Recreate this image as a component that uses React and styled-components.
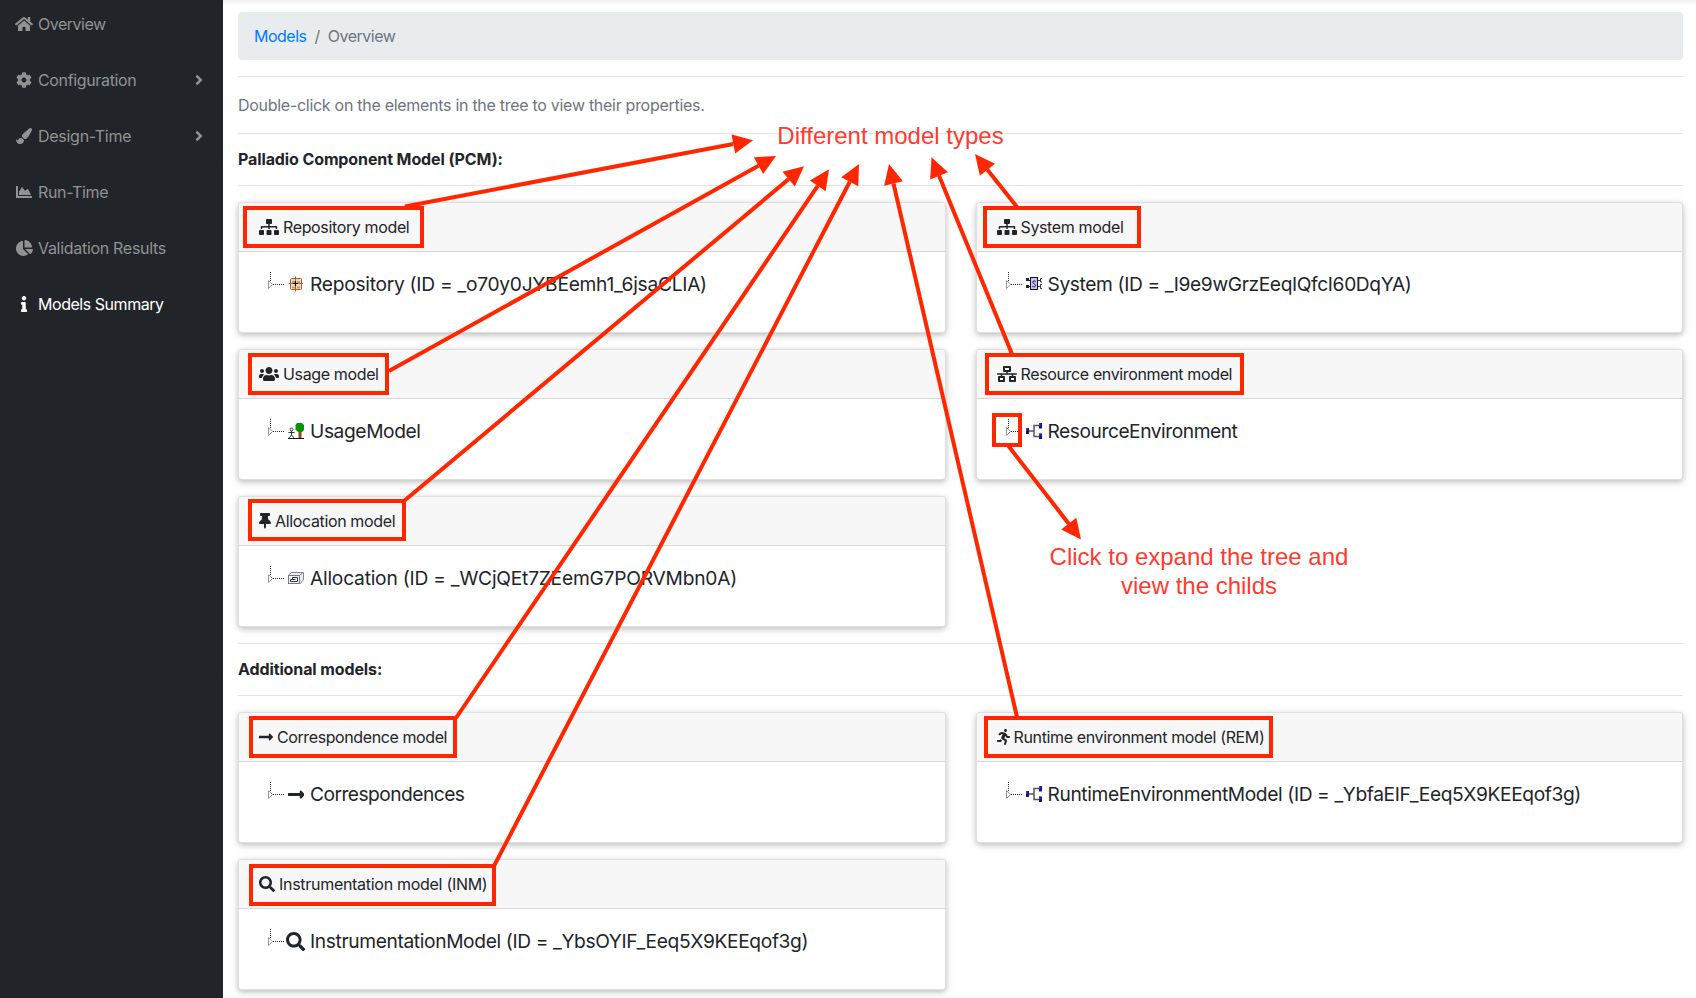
import React from 'react';
import styled, { createGlobalStyle } from 'styled-components';
import {
  FaHome, FaCog, FaPaintBrush, FaChartArea, FaChartPie, FaInfo, FaAngleRight,
  FaSitemap, FaUsers, FaNetworkWired, FaThumbtack, FaLongArrowAltRight, FaRunning, FaSearch,
} from 'react-icons/fa';

const GlobalStyle = createGlobalStyle`
  *, *::before, *::after { box-sizing: border-box; }
  body {
    margin: 0;
    background: #fff;
    color: #212529;
    font: 400 16px/24px Inter, "Liberation Sans", sans-serif;
    overflow: hidden;
  }
`;

const Page = styled.div`
  position: relative;
  display: flex;
  width: 1696px;
  height: 998px;
  overflow: hidden;
`;

const Sidebar = styled.nav`
  flex: 0 0 223px;
  background: #212529;
  display: flex;
  flex-direction: column;
  margin-top: -4px;
`;

const NavItem = styled.a`
  display: flex;
  align-items: center;
  height: 56px;
  padding: 0 20px 0 14px;
  color: ${(p) => (p.$active ? '#fff' : '#909294')};
  letter-spacing: ${(p) => p.$track ?? -0.35}px;
`;

/* Font icons keep their own aspect ratio: $w is the glyph width at the given height. */
const FontIcon = styled.span`
  display: flex;
  flex: none;
  svg {
    flex: none;
    width: ${(p) => p.$w}px;
    height: ${(p) => p.$h ?? 16}px;
  }
`;

const NavIcon = styled(FontIcon)`
  justify-content: center;
  width: 20px;
  margin-right: 4px;
`;

const NavText = styled.span`
  flex: 1;
  white-space: nowrap;
`;

const Main = styled.main`
  flex: 1;
  padding: 12px 13px 0 15px;
  background: linear-gradient(#f1f1f1, #fff 5px);
`;

const Breadcrumb = styled.div`
  display: flex;
  height: 48px;
  padding: 12px 16px;
  border-radius: 4px;
  background: #e9ecef;
  color: #6c757d;
  letter-spacing: -0.5px;
`;

const Crumb = styled.a`
  color: #007bff;
`;

const Slash = styled.span`
  padding: 0 8px;
`;

const Rule = styled.hr`
  margin: 16px 0;
  border: 0;
  border-top: 1px solid rgba(0, 0, 0, 0.1);
`;

const Hint = styled.p`
  margin: 0;
  color: #6c757d;
  letter-spacing: -0.285px;
`;

const Heading = styled.h6`
  margin: 0;
  font-size: 16px;
  line-height: 19.2px;
  font-weight: 700;
  letter-spacing: -0.11px;
`;

const CardGrid = styled.div`
  display: grid;
  grid-template-columns: 1fr 1fr;
  gap: 16px 30px;
`;

const Card = styled.section`
  height: 131px;
  border: 1px solid rgba(0, 0, 0, 0.125);
  border-radius: 4px;
  background: #fff;
  box-shadow: 0 2px 5px rgba(0, 0, 0, 0.16), 0 2px 10px rgba(0, 0, 0, 0.12);
`;

const CardHeader = styled.header`
  display: flex;
  align-items: center;
  height: 49px;
  padding: 0 20px;
  gap: 4px;
  background: #f7f7f7;
  border-bottom: 1px solid rgba(0, 0, 0, 0.125);
  border-radius: 3px 3px 0 0;
  letter-spacing: ${(p) => p.$track ?? -0.36}px;
  white-space: nowrap;
`;

const TreeRow = styled.div`
  display: flex;
  align-items: center;
  height: 28px;
  margin: 18px 0 0 28px;
  font-size: 19.2px;
  letter-spacing: ${(p) => p.$track ?? -0.35}px;
  white-space: nowrap;
`;

const NodeIcon = styled.span`
  display: flex;
  flex: none;
  justify-content: center;
  align-items: center;
  width: 22px;
  margin-right: 3px;
`;

const AnnotationLayer = styled.svg`
  position: absolute;
  left: 0;
  top: 0;
  pointer-events: none;
`;

const Note = styled.div`
  position: absolute;
  left: ${(p) => p.$x}px;
  top: ${(p) => p.$y}px;
  width: ${(p) => p.$w}px;
  text-align: center;
  white-space: nowrap;
  color: #ff3b30;
  font: 24px/29px "Liberation Sans", sans-serif;
`;

const Branch = () => (
  <svg width="18" height="28" viewBox="0 0 18 28" shapeRendering="crispEdges">
    <path d="M3.5 2V14M6 14.5H17" stroke="#222" strokeDasharray="1 1" fill="none" />
    <path d="M1.5 10.5L5.5 14.5L1.5 18.5Z" stroke="#999" fill="#fff" shapeRendering="auto" />
  </svg>
);

const RepositoryIcon = () => (
  <svg width="16" height="16" viewBox="0 0 16 16">
    <rect x="2.500" y="2.500" width="11" height="11" rx="1" fill="#f3d9c4" stroke="#a9622c" />
    <path d="M4 6h3M9 6h3M4 11.500h3M9 11.500h3" stroke="#cf9a70" strokeWidth="2" />
    <path d="M7.500 0.500V15.500M0.500 7.500H15" stroke="#a9622c" />
    <path d="M7.500 5V10M5 7.500H10" stroke="#111" strokeWidth="1.2" />
  </svg>
);

const SystemIcon = () => (
  <svg width="16" height="16" viewBox="0 0 16 16">
    <path d="M0 2h3v3H0zM0 9h3v3H0z" fill="#222" />
    <path d="M3 4.500h2M3 10.500h2" stroke="#222" />
    <rect x="4.500" y="1.500" width="7" height="12" fill="#c3c3ff" stroke="#111" />
    <path d="M9.800 5.500C9 4.600 6.700 4.700 6.700 6.200S9.600 7.800 9.600 9.500S7 11.200 6.300 10.200" fill="none" stroke="#222" />
    <path d="M12 4.500h2M16 2.500h-1.500v3.500H16M12 10.500h2M16 8.500h-1.500v4H16" fill="none" stroke="#222" strokeWidth="0.9" />
  </svg>
);

const UsageIcon = () => (
  <svg width="16" height="16" viewBox="0 0 16 16">
    <path d="M10.500 8h3v7h-3z" fill="#8a5208" />
    <path d="M9 0h5l2 2v5l-2 2h-4L7.500 6.500V2z" fill="#079207" />
    <circle cx="3.500" cy="6.500" r="1.500" fill="#fff" stroke="#222" strokeWidth="0.9" />
    <path d="M3.500 8v4M0.500 9.500h6M3.500 12L1 15M3.500 12L6 15" fill="none" stroke="#222" strokeWidth="0.9" />
    <path d="M0 15.500h16" stroke="#111" />
  </svg>
);

const AllocationIcon = () => (
  <svg width="16" height="16" viewBox="0 0 16 16">
    <path d="M0.500 5L3.500 2.500H15.500V9.500L12.500 13.500H0.500Z" fill="#e9e9f0" stroke="#85858f" />
    <rect x="0.500" y="5.500" width="11" height="8" fill="#f5f5fa" stroke="#77778a" />
    <path d="M11.500 5.500L15 2.500" fill="none" stroke="#85858f" />
    <path d="M4.500 7.500H9.500V11.500H2.500V9.500H4.500Z" fill="#fff" stroke="#2222bb" />
    <path d="M5 9.500h2.500" stroke="#2222bb" />
  </svg>
);

const EnvironmentIcon = () => (
  <svg width="16" height="16" viewBox="0 0 16 16">
    <path d="M3 8H8M14 2.500H8V13.500H14" fill="none" stroke="#555" strokeWidth="1.500" />
    <path d="M0 5h3v6H0zM13 0h3v5.500h-3zM13 10.500h3V16h-3z" fill="#14147c" />
    <path d="M0 5h1.500v3H0zM13 0h1.500v3h-1.500zM13 10.500h1.500v3h-1.500z" fill="#3838c4" />
  </svg>
);

const ArrowNode = () => <FontIcon $w={16.8} $h={19.2}><FaLongArrowAltRight /></FontIcon>;
const SearchNode = () => <FontIcon $w={19.2} $h={19.2}><FaSearch /></FontIcon>;

const navItems = [
  { icon: FaHome, w: 18, label: 'Overview', track: -0.48 },
  { icon: FaCog, w: 16, label: 'Configuration', expandable: true },
  { icon: FaPaintBrush, w: 16, label: 'Design-Time', track: -0.27, expandable: true },
  { icon: FaChartArea, w: 16, label: 'Run-Time' },
  { icon: FaChartPie, w: 17, label: 'Validation Results', track: -0.3 },
  { icon: FaInfo, w: 6, label: 'Models Summary', track: -0.46, active: true },
];

const pcmModels = [
  { icon: FaSitemap, w: 20, title: 'Repository model', node: RepositoryIcon, text: 'Repository (ID = _o70y0JYBEemh1_6jsaCLIA)', track: -0.27 },
  { icon: FaSitemap, w: 20, title: 'System model', node: SystemIcon, text: 'System (ID = _I9e9wGrzEeqIQfcI60DqYA)', track: -0.38 },
  { icon: FaUsers, w: 20, title: 'Usage model', node: UsageIcon, text: 'UsageModel', track: -0.4 },
  { icon: FaNetworkWired, w: 20, title: 'Resource environment model', node: EnvironmentIcon, text: 'ResourceEnvironment', track: -0.46 },
  { icon: FaThumbtack, w: 12, title: 'Allocation model', node: AllocationIcon, text: 'Allocation (ID = _WCjQEt7ZEemG7PORVMbn0A)', track: -0.22 },
];

const additionalModels = [
  { icon: FaLongArrowAltRight, w: 14, title: 'Correspondence model', titleTrack: -0.4, node: ArrowNode, text: 'Correspondences', track: -0.53 },
  { icon: FaRunning, w: 13, title: 'Runtime environment model (REM)', node: EnvironmentIcon, text: 'RuntimeEnvironmentModel (ID = _YbfaEIF_Eeq5X9KEEqof3g)', track: -0.39 },
  { icon: FaSearch, w: 16, title: 'Instrumentation model (INM)', titleTrack: -0.29, node: SearchNode, text: 'InstrumentationModel (ID = _YbsOYIF_Eeq5X9KEEqof3g)', track: -0.37 },
];

// Outer edges of each highlight frame: left, top, right, bottom.
const frames = [
  [243, 206, 424, 248], [248, 353, 389, 395], [248, 499, 406, 541],
  [249, 716, 457, 758], [249, 864, 496, 906], [983, 206, 1141, 248],
  [985, 353, 1244, 395], [992, 413, 1022, 447], [984, 716, 1273, 758],
];

// Tail point followed by tip point.
const arrows = [
  [405, 206.5, 753, 140.3], [389, 371, 776, 156], [404, 501, 804, 166.3],
  [456, 718, 829, 169.3], [494, 866, 859, 164], [1017, 717, 889, 164],
  [1012, 354, 931.5, 157.3], [1017, 207, 975, 154], [1008.5, 446, 1081, 539.5],
];

function Arrow({ points: [x1, y1, x2, y2] }) {
  const length = Math.hypot(x2 - x1, y2 - y1);
  const ux = (x2 - x1) / length;
  const uy = (y2 - y1) / length;
  const bx = x2 - ux * 20;
  const by = y2 - uy * 20;
  return (
    <g fill="#ff2600">
      <path d={`M${x1} ${y1}L${bx} ${by}`} stroke="#ff2600" strokeWidth="4" />
      <path d={`M${x2} ${y2}L${bx - uy * 9.6} ${by + ux * 9.6}L${bx + uy * 9.6} ${by - ux * 9.6}Z`} />
    </g>
  );
}

function ModelCards({ models }) {
  return (
    <CardGrid>
      {models.map(({ icon: Icon, w, title, node: Node, text, track, titleTrack }) => (
        <Card key={title}>
          <CardHeader $track={titleTrack}>
            <FontIcon $w={w}><Icon /></FontIcon>
            <span>{title}</span>
          </CardHeader>
          <TreeRow $track={track}>
            <Branch />
            <NodeIcon><Node /></NodeIcon>
            <span>{text}</span>
          </TreeRow>
        </Card>
      ))}
    </CardGrid>
  );
}

export default function App() {
  return (
    <>
      <GlobalStyle />
      <Page>
        <Sidebar>
          {navItems.map(({ icon: Icon, w, label, expandable, active, track }) => (
            <NavItem key={label} $active={active} $track={track}>
              <NavIcon $w={w}><Icon /></NavIcon>
              <NavText>{label}</NavText>
              {expandable && <FontIcon $w={8}><FaAngleRight /></FontIcon>}
            </NavItem>
          ))}
        </Sidebar>
        <Main>
          <Breadcrumb><Crumb>Models</Crumb><Slash>/</Slash><span>Overview</span></Breadcrumb>
          <Rule />
          <Hint>Double-click on the elements in the tree to view their properties.</Hint>
          <Rule />
          <Heading>Palladio Component Model (PCM):</Heading>
          <Rule />
          <ModelCards models={pcmModels} />
          <Rule />
          <Heading>Additional models:</Heading>
          <Rule />
          <ModelCards models={additionalModels} />
        </Main>
        <AnnotationLayer width="1696" height="998">
          {frames.map(([l, t, r, b]) => (
            <rect key={`${l}-${t}`} x={l + 2} y={t + 2} width={r - l - 4} height={b - t - 4} fill="none" stroke="#ff2600" strokeWidth="4" />
          ))}
          {arrows.map((points) => <Arrow key={points.join()} points={points} />)}
        </AnnotationLayer>
        <Note $x={740.5} $y={121} $w={300}>Different model types</Note>
        <Note $x={999} $y={542} $w={400}>Click to expand the tree and<br />view the childs</Note>
      </Page>
    </>
  );
}
